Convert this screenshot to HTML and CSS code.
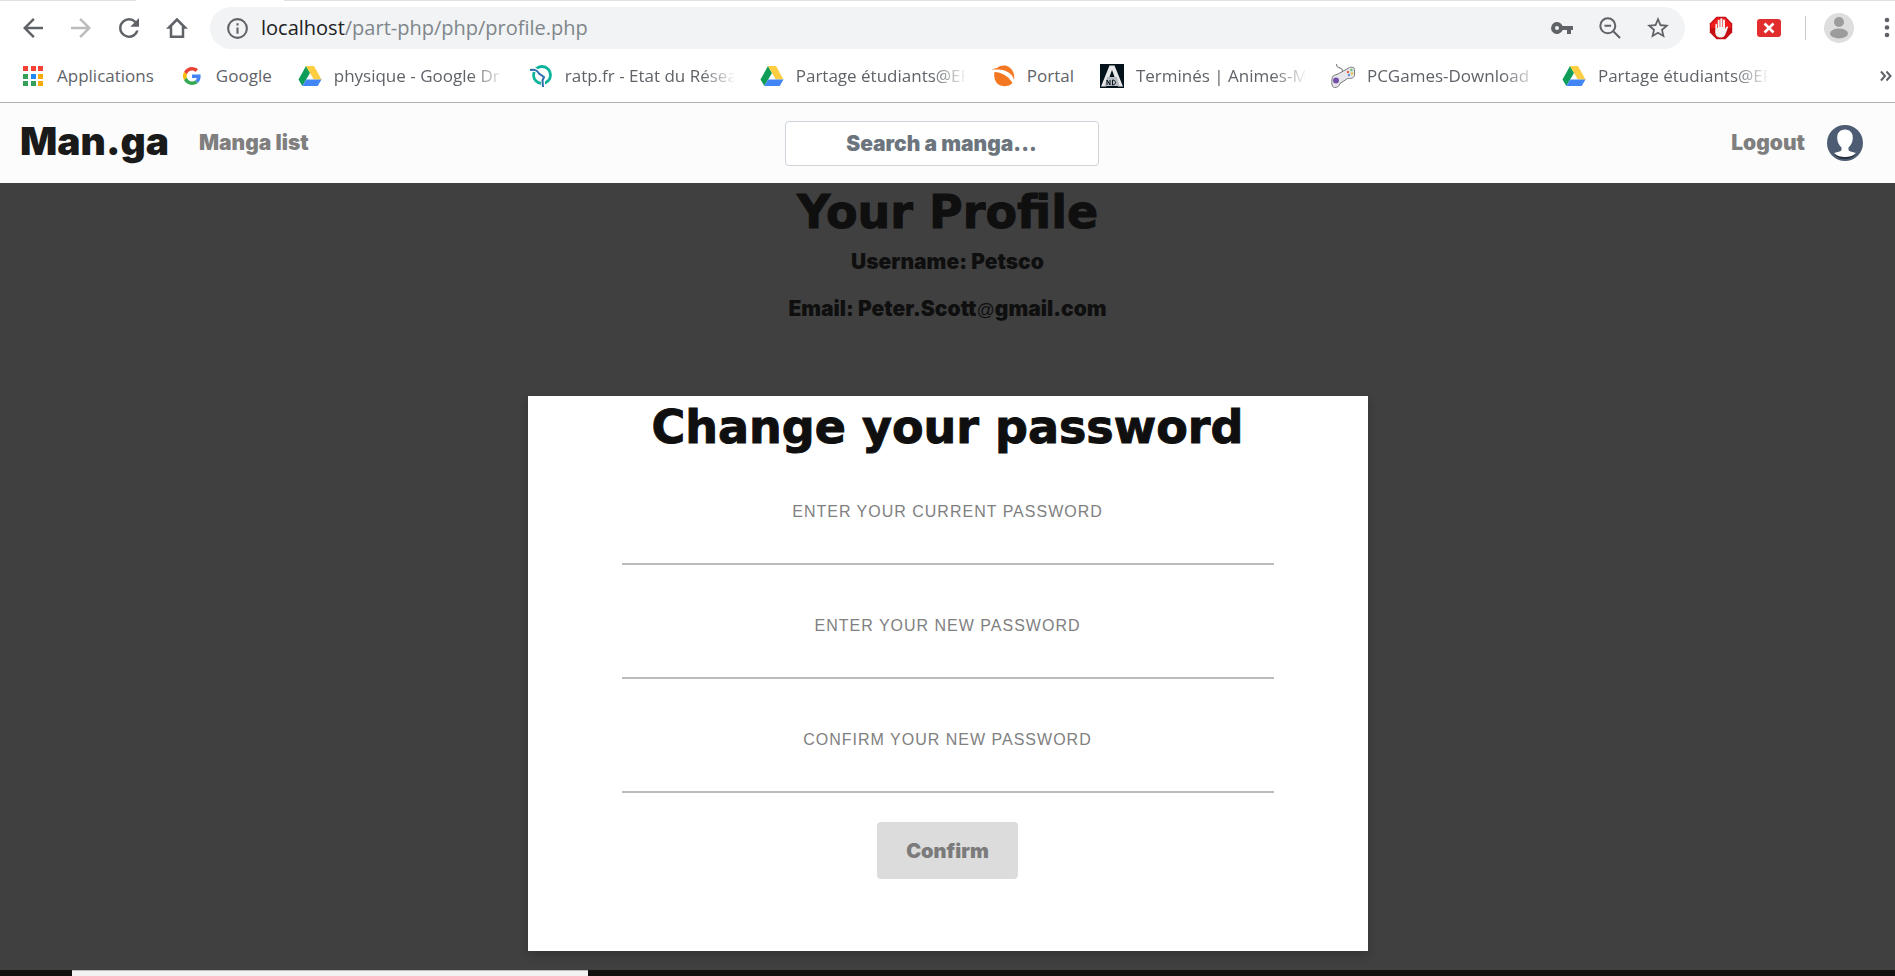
FILE: index.html
```html
<!DOCTYPE html>
<html lang="en">
<head>
<meta charset="utf-8">
<meta name="viewport" content="width=device-width, initial-scale=1">
<title>Man.ga - Profile</title>
<link rel="stylesheet" href="styles.css">
</head>
<body>
<svg class="defs" aria-hidden="true">
  <symbol id="drive" viewBox="0 0 24 24">
    <path fill="#0f9d58" d="M8 2 0.500 15.500 4.300 22 12 9z"/>
    <path fill="#ffcd40" d="M8 2h8l7.500 13.500h-7.700z"/>
    <path fill="#4285f4" d="M8.200 15.500h15.300L19.700 22H4.300z"/>
  </symbol>
</svg>
<div class="screen">
  <header class="browser">
    <div class="tabstrip"><span class="tab-active"></span></div>
    <div class="toolbar">
      <button class="tool" aria-label="Back"><svg viewBox="0 0 24 24"><path d="M20 11H7.800l5.600-5.600L12 4l-8 8 8 8 1.400-1.400L7.800 13H20z"/></svg></button>
      <button class="tool tool-off" aria-label="Forward"><svg viewBox="0 0 24 24"><path d="M12 4l-1.400 1.400 5.600 5.600H4v2h12.200l-5.600 5.600L12 20l8-8z"/></svg></button>
      <button class="tool" aria-label="Reload"><svg viewBox="0 0 24 24"><path d="M17.650 6.350A7.960 7.960 0 0 0 12 4a8 8 0 1 0 7.730 10h-2.080A6 6 0 1 1 12 6c1.660 0 3.140.690 4.220 1.780L13 11h7V4z"/></svg></button>
      <button class="tool" aria-label="Home"><svg viewBox="0 0 24 24"><path fill="none" stroke="currentColor" stroke-width="2" d="M12 5.200 5.600 11.600H7.200V19h9.600v-7.400h1.600z"/></svg></button>
      <div class="omnibox">
        <svg class="info" viewBox="0 0 24 24"><path d="M11 7h2v2h-2zm0 4h2v6h-2zm1-9a10 10 0 1 0 0 20 10 10 0 0 0 0-20zm0 18a8 8 0 1 1 0-16 8 8 0 0 1 0 16z"/></svg>
        <span class="url"><span class="host">localhost</span>/part-php/php/profile.php</span>
        <div class="omni-actions">
          <svg viewBox="0 0 24 24"><path d="M12.650 10A6 6 0 1 0 12.650 14H17v4h4v-4h2v-4zM7 14a2 2 0 1 1 0-4 2 2 0 0 1 0 4z"/></svg>
          <svg viewBox="0 0 24 24" class="stroked"><circle cx="9.800" cy="9.800" r="7.500"/><path d="M6.500 9.800h6.600M15 15l7 7"/></svg>
          <svg viewBox="1 1 22 22"><path d="M22 9.240l-7.190-.620L12 2 9.190 8.630 2 9.240l5.460 4.730L5.820 21 12 17.270 18.180 21l-1.630-7.030zM12 15.400l-3.760 2.270 1-4.280-3.320-2.880 4.380-.380L12 6.100l1.710 4.040 4.380.380-3.320 2.880 1 4.280z"/></svg>
        </div>
      </div>
      <div class="extensions">
        <svg class="ext" viewBox="0 0 24 24"><path fill="#c40d12" d="M7.500.800h9l6.700 6.700v9l-6.700 6.700h-9L.800 16.500v-9z"/><path fill="#f01b1b" d="M8 2h8l6 6v4H2V8z"/><path fill="#f3f3f3" d="M6.500 8c.700-.400 1.500 0 1.500.800V12h.700V4.700c0-1.300 2-1.300 2 0V11h.600V3.300c0-1.300 2.100-1.300 2.100 0V11h.600V4.500c0-1.300 2-1.300 2 0V13l1.200-2c.700-1 2.200-.500 1.700.700l-2.300 6c-.7 2-2 3.800-4.800 3.800-3.500 0-5.300-1.800-5.600-5z"/></svg>
        <svg class="ext" viewBox="0 0 24 24"><rect x="0" y="3" width="24" height="18" rx="3" fill="#e12d2d"/><path stroke="#fff" stroke-width="2.600" d="M7.500 7.500l9 9M16.500 7.500l-9 9"/></svg>
        <span class="divider"></span>
        <svg class="avatar" viewBox="0 0 30 30"><circle cx="15" cy="15" r="15" fill="#dedede"/><circle cx="15" cy="9" r="5" fill="#9c9c9c"/><ellipse cx="15" cy="20.500" rx="9" ry="5" fill="#9c9c9c"/></svg>
        <svg class="menu" viewBox="0 0 6 22"><circle cx="3" cy="3" r="2.300"/><circle cx="3" cy="10.500" r="2.300"/><circle cx="3" cy="18" r="2.300"/></svg>
      </div>
    </div>
    <nav class="bookmarks" aria-label="Bookmarks">
      <a class="mark" href="#"><svg viewBox="0 0 24 24"><path fill="#f44336" d="M2 2h5v5H2zM10 2h5v5h-5zM17 2h5v5h-5z"/><path fill="#34a05a" d="M2 10h5v5H2zM2 17h5v5H2z"/><path fill="#1e88f5" d="M10 10h5v5h-5z"/><path fill="#34a05a" d="M10 17h5v5h-5z"/><path fill="#fbab08" d="M17 10h5v5h-5zM17 17h5v5h-5z"/></svg><span>Applications</span></a>
      <a class="mark" href="#"><svg viewBox="-8 -8 64 64"><path fill="#ea4335" d="M24 9.500c3.540 0 6.710 1.220 9.210 3.600l6.850-6.850C35.900 2.380 30.470 0 24 0 14.620 0 6.510 5.380 2.560 13.220l7.980 6.190C12.430 13.720 17.740 9.500 24 9.500z"/><path fill="#4285f4" d="M46.980 24.550c0-1.570-.150-3.090-.380-4.550H24v9.020h12.940c-.580 2.960-2.260 5.480-4.780 7.180l7.730 6c4.510-4.180 7.090-10.360 7.090-17.650z"/><path fill="#fbbc05" d="M10.530 28.590A14.500 14.500 0 0 1 10.530 19.410l-7.980-6.190a24 24 0 0 0 0 21.560z"/><path fill="#34a853" d="M24 48c6.480 0 11.930-2.130 15.890-5.810l-7.730-6c-2.150 1.450-4.920 2.300-8.160 2.300-6.260 0-11.570-4.220-13.470-9.910l-7.980 6.190C6.510 42.620 14.620 48 24 48z"/></svg><span>Google</span></a>
      <a class="mark mark-long" href="#"><svg><use href="#drive"/></svg><span>physique - Google Dr</span></a>
      <a class="mark mark-long" href="#"><svg viewBox="0 0 24 24" fill="none"><circle cx="13" cy="11" r="8.500" stroke="#0bb39c" stroke-width="2.800"/><path stroke="#fff" stroke-width="4" d="M1 6c5-1 8 0 9 4l4 3v10"/><path stroke="#2c6db0" stroke-width="2" d="M1 6c5-1 7 0 9 3.500l5 3.500-1.500 3.500L14 23"/></svg><span>ratp.fr - Etat du Résea</span></a>
      <a class="mark mark-long" href="#"><svg><use href="#drive"/></svg><span>Partage étudiants@EF</span></a>
      <a class="mark" href="#"><svg viewBox="0 0 24 24" fill="#f47721"><path d="M0 5.500c3-1 5-1 6-1.500C12-.500 20 1.500 22.500 9c.8 2.500 1 4.500.5 7-1-6-8-10.500-16-10.500z"/><path d="M3.500 8c8 .5 14 4.500 18 11-4 4-10 4-14 1.500C4 18 2.500 13 3.500 8z"/></svg><span>Portal</span></a>
      <a class="mark mark-long" href="#"><svg viewBox="0 0 24 24"><path fill="#04121c" d="M0 0h24v24H0z"/><path fill="#e8e8e8" d="M9.500 1.500h5L23 22.500h-5L12 6 6 22.500H1z"/><path fill="#b8bcc0" d="M7 13h10l2.500 9h-15z"/><path stroke="#04121c" fill="none" d="M7 21v-5l3 5v-5M12.500 16v5c4 0 4-5 0-5"/></svg><span>Terminés | Animes-Ma</span></a>
      <a class="mark mark-long" href="#"><svg viewBox="0 0 24 24"><path fill="none" stroke="#8b8b90" stroke-width="1.300" d="M5.500 0c0 3 1 3 3.500 4s3 2 2.500 4"/><path fill="#e6e6eb" stroke="#77777d" d="M1 15.500C1 12 3 11 6 10.500L16 5c3-2.500 7.500-2.500 7.500.5v6c-1 3-4 3-7 3L9 19.500c-1 3-3 4-5.500 4S.500 20 1 15.500z"/><circle cx="5" cy="16.500" r="3" fill="#7450a8"/><circle cx="17" cy="8" r="1.200" fill="#e85e48"/><circle cx="20.500" cy="6" r="1.200" fill="#69c46a"/><circle cx="21" cy="9.500" r="1.200" fill="#e7c23a"/><circle cx="18" cy="11" r="1.200" fill="#5b93dc"/></svg><span>PCGames-Download</span></a>
      <a class="mark mark-long" href="#"><svg><use href="#drive"/></svg><span>Partage étudiants@EF</span></a>
      <button class="more" aria-label="More bookmarks"><svg viewBox="0 0 12 12"><path d="M1 1.500 5 6l-4 4.500M6.500 1.500l4 4.500-4 4.500"/></svg></button>
    </nav>
  </header>

  <nav class="site-nav">
    <div class="nav-left">
      <a class="brand" href="#">Man.ga</a>
      <a class="nav-link" href="#">Manga list</a>
    </div>
    <input class="search" type="text" aria-label="Search a manga" placeholder="Search a manga...">
    <div class="nav-right">
      <a class="nav-link" href="#">Logout</a>
      <a class="user" href="#" aria-label="Your profile"><svg viewBox="0 0 36 36"><circle cx="18" cy="18" r="18" fill="#4d5c72"/><path fill="#272f3c" d="M7 28 18 32l11-4c-2 4-6 6-11 6s-9-2-11-6z"/><path fill="#fff" d="M18 4.500c5 0 8 3.500 7.800 8.500-.1 4-2 7.500-4.300 9.500-.2 2.500 0 3.300 2 4l5.500 1.500c-3 3-7 4-11 4s-8-1-11-4l5.500-1.500c2-.7 2.200-1.500 2-4-2.300-2-4.200-5.500-4.300-9.500C10 8 13 4.500 18 4.500z"/></svg></a>
    </div>
  </nav>

  <main class="page">
    <section class="profile">
      <h1 class="title">Your Profile</h1>
      <p class="detail">Username: Petsco</p>
      <p class="detail">Email: Peter.Scott<span class="at">@</span>gmail.com</p>
    </section>
    <form class="dialog" role="dialog" aria-labelledby="dialog-title">
      <h2 class="title" id="dialog-title">Change your password</h2>
      <div class="fields">
        <div class="field"><label for="current">ENTER YOUR CURRENT PASSWORD</label><input id="current" type="password"></div>
        <div class="field"><label for="new">ENTER YOUR NEW PASSWORD</label><input id="new" type="password"></div>
        <div class="field"><label for="confirm">CONFIRM YOUR NEW PASSWORD</label><input id="confirm" type="password"></div>
      </div>
      <button class="confirm" type="submit">Confirm</button>
    </form>
  </main>
  <footer class="taskbar"><span class="taskbar-search"></span></footer>
</div>
</body>
</html>
```
FILE: styles.css
```css
* {
  box-sizing: border-box;
}

body {
  margin: 0;
  font-family: Inter, "Liberation Sans", sans-serif;
  color: #0f0f0f;
  background: #404040;
}

a {
  color: inherit;
  text-decoration: none;
}

button {
  border: 0;
  padding: 0;
  background: none;
  color: inherit;
  font: inherit;
}

svg {
  display: block;
  flex: none;
}

.defs {
  position: absolute;
  width: 0;
  height: 0;
}

.screen {
  display: flex;
  flex-direction: column;
  min-height: 100vh;
  overflow: hidden;
}

/* Browser chrome */
.browser {
  background: #fff;
  border-bottom: 1px solid #b3b3b3;
  color: #5f6368;
  font-family: "Open Sans", "Noto Sans", sans-serif;
}

.tabstrip {
  height: 1px;
  padding-left: 136px;
  background: #dee1e6;
}

.tab-active {
  display: block;
  width: 148px;
  height: 1px;
  background: #fff;
}

.toolbar {
  display: flex;
  align-items: center;
  gap: 18px;
  padding: 6px 5px 6px 18px;
}

.tool svg {
  width: 30px;
  height: 30px;
  fill: currentColor;
}

.tool-off {
  color: #babcbe;
}

.omnibox {
  flex: 1;
  display: flex;
  align-items: center;
  gap: 11px;
  height: 42px;
  padding: 0 15px 0 15px;
  border-radius: 21px;
  background: #f1f3f4;
}

.info {
  width: 25px;
  height: 25px;
  fill: #5f6368;
}

.url {
  flex: 1;
  font-size: 20px;
  line-height: 28px;
  color: #80868b;
}

.host {
  color: #202124;
}

.omni-actions {
  display: flex;
  gap: 24px;
}

.omni-actions svg {
  width: 24px;
  height: 24px;
  fill: #5f6368;
}

.omni-actions .stroked {
  fill: none;
  stroke: #5f6368;
  stroke-width: 2;
}

.extensions {
  display: flex;
  align-items: center;
  gap: 24px;
  padding-left: 6px;
}

.ext {
  width: 24px;
  height: 24px;
}

.divider {
  width: 1px;
  height: 24px;
  background: #c8cacd;
}

.avatar {
  width: 30px;
  height: 30px;
  margin-left: -6px;
}

.menu {
  width: 6px;
  height: 22px;
  margin-left: 6px;
  fill: #5f6368;
}

.bookmarks {
  display: flex;
  align-items: center;
  gap: 26px;
  height: 47px;
  padding: 0 3px 6px 21px;
}

.mark {
  display: flex;
  align-items: center;
  gap: 12px;
}

.mark svg {
  width: 24px;
  height: 24px;
}

.mark span {
  white-space: nowrap;
  font-size: 17px;
  line-height: 26px;
}

.mark-long span {
  width: 169px;
  -webkit-mask-image: linear-gradient(to right, #000 136px, transparent 172px);
  mask-image: linear-gradient(to right, #000 136px, transparent 172px);
}

.more {
  margin-left: auto;
}

.more svg {
  width: 12px;
  height: 12px;
  fill: none;
  stroke: #5f6368;
  stroke-width: 2;
}

/* Site navigation */
.site-nav {
  display: grid;
  grid-template-columns: 1fr 314px 1fr;
  align-items: center;
  height: 80px;
  padding: 0 32px 0 20px;
  background: #fcfcfc;
  font-weight: 900;
}

.nav-left,
.nav-right {
  display: flex;
  align-items: center;
}

.nav-left {
  gap: 30px;
}

.nav-right {
  justify-content: flex-end;
  gap: 22px;
}

.brand {
  padding-bottom: 4px;
  font-size: 39px;
  line-height: 48px;
  color: #1a1a1a;
}

.nav-link {
  font-size: 21px;
  line-height: 30px;
  color: #7f7f7f;
}

.user svg {
  width: 36px;
  height: 36px;
}

.search {
  width: 100%;
  height: 45px;
  border: 1px solid #ced4da;
  border-radius: 4px;
  background: #fff;
  font-family: inherit;
  font-size: 21px;
  font-weight: 900;
  text-align: center;
}

.search::placeholder {
  color: #6c757d;
}

/* Profile page */
.page {
  flex: 1;
  display: flex;
  flex-direction: column;
  align-items: center;
  padding-bottom: 19px;
  background: #404040;
  text-align: center;
}

.title {
  margin: 0;
  font-family: "DejaVu Sans", Verdana, sans-serif;
  font-size: 46px;
  font-weight: 700;
  line-height: 58px;
  -webkit-text-stroke: 1px currentColor;
}

.profile {
  margin-bottom: 54px;
}

.detail {
  margin: 0 0 17px;
  font-size: 21px;
  font-weight: 900;
  line-height: 30px;
}

.profile .title {
  margin-bottom: 6px;
}

.at {
  font-family: "Liberation Sans", sans-serif;
  font-size: 18px;
  font-weight: 400;
}

.dialog {
  flex: 1;
  width: 100%;
  max-width: 840px;
  padding: 2px 94px 60px;
  background: #fff;
  box-shadow: 0 4px 10px rgba(0, 0, 0, 0.2);
}

.fields {
  display: grid;
  gap: 49px;
  margin: 44px 0 29px;
}

.field {
  display: grid;
}

.field label {
  font: 400 16px/24px "Liberation Sans", sans-serif;
  letter-spacing: 1px;
  color: #808080;
}

.field input {
  width: 100%;
  height: 41px;
  border: 0;
  border-bottom: 2px solid #bbb;
  background: none;
  text-align: center;
}

.confirm {
  height: 57px;
  padding: 0 29px;
  border-radius: 4px;
  background: #dcdcdc;
  color: #7b7b7b;
  font-size: 20px;
  font-weight: 900;
}

/* Desktop taskbar */
.taskbar {
  height: 6px;
  padding-left: 72px;
  background: #10100f;
}

.taskbar-search {
  display: block;
  width: 516px;
  height: 6px;
  border-top: 1px solid #bbb;
  background: #f2f2f2;
}
```
